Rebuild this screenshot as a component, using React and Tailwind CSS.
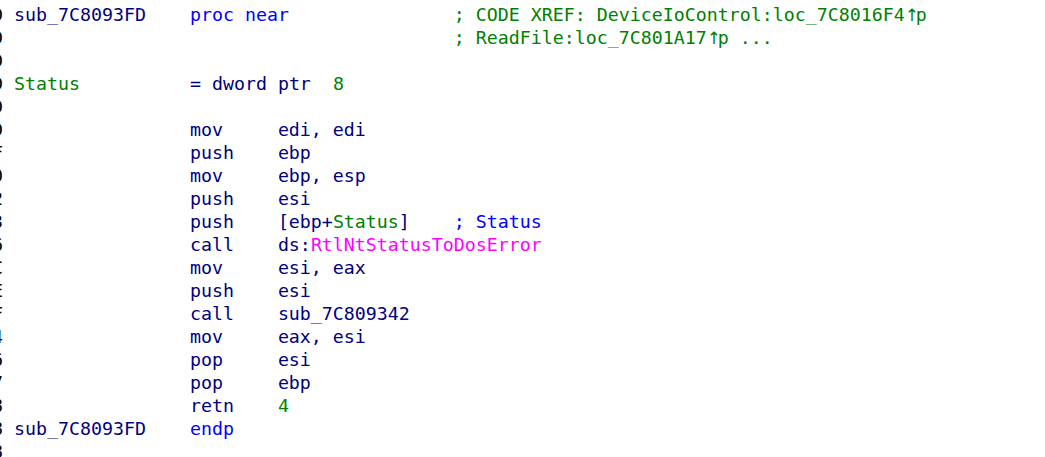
import React from "react";

// colour classes used by the listing
const N = "text-[#000080]"; // names / instructions
const B = "text-[#0000ff]"; // keywords, repeatable comments
const G = "text-[#008000]"; // comments, stack vars, numbers
const M = "text-[#ff00ff]"; // imported names
const A = "arrow"; // xref arrow, green

const lines = [
  ["7C8093FD", [["sub_7C8093FD    ", N], ["proc near", B], ["               ", N], ["; CODE XREF: DeviceIoControl:loc_7C8016F4", G], ["↑", A], ["p", G]]],
  ["7C8093FD", [["                                        ", N], ["; ReadFile:loc_7C801A17", G], ["↑", A], ["p ...", G]]],
  ["7C8093FD", []],
  ["7C8093FD", [["Status", G], ["          = dword ptr  ", N], ["8", G]]],
  ["7C8093FD", []],
  ["7C8093FD", [["                mov     edi, edi", N]]],
  ["7C8093FF", [["                push    ebp", N]]],
  ["7C809400", [["                mov     ebp, esp", N]]],
  ["7C809402", [["                push    esi", N]]],
  ["7C809403", [["                push    [ebp+", N], ["Status", G], ["]    ", N], ["; Status", B]]],
  ["7C809406", [["                call    ds:", N], ["RtlNtStatusToDosError", M]]],
  ["7C80940C", [["                mov     esi, eax", N]]],
  ["7C80940E", [["                push    esi", N]]],
  ["7C80940F", [["                call    sub_7C809342", N]]],
  ["7C809414", [["                mov     eax, esi", N]]],
  ["7C809416", [["                pop     esi", N]]],
  ["7C809417", [["                pop     ebp", N]]],
  ["7C809418", [["                retn    ", N], ["4", G]]],
  ["7C809418", [["sub_7C8093FD    ", N], ["endp", B]]],
  ["7C809418", []],
];

export default function App() {
  return (
    <div className="w-[1045px] h-[457px] overflow-hidden bg-white">
      <div className="pt-[3px] ml-[-151px] font-['DejaVu_Sans_Mono',monospace] text-[18.27px] leading-[23px] whitespace-pre">
        {lines.map(([addr, segs], i) => (
          <div key={i} className="h-[23px]">
            <span className="text-black">{".text:" + addr + " "}</span>
            {segs.map(([t, c], j) =>
              c === A ? (
                <span
                  key={j}
                  className="inline-block w-[11px] text-center text-[#008000] font-['DejaVu_Sans',sans-serif] text-[17px]"
                >
                  {t}
                </span>
              ) : (
                <span key={j} className={c}>
                  {t}
                </span>
              )
            )}
          </div>
        ))}
      </div>
    </div>
  );
}
